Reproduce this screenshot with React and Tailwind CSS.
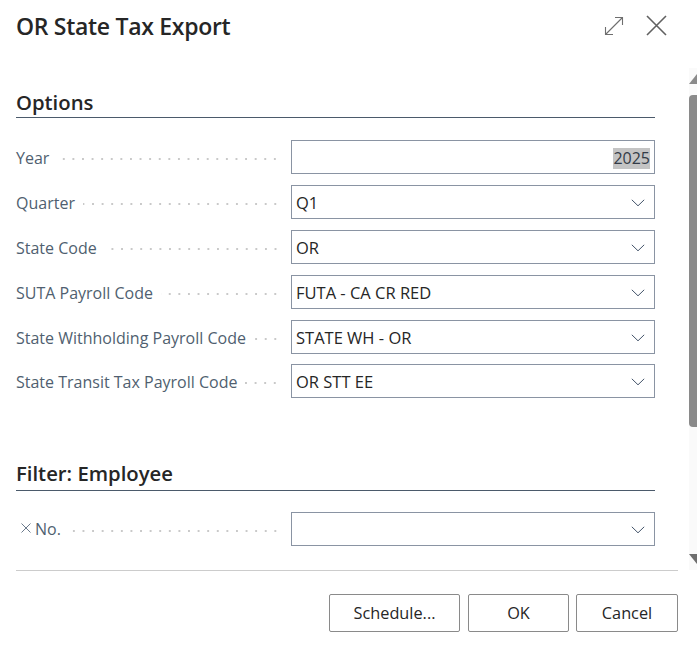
import React from 'react';

const fields = [
  { label: 'Year', value: '2025', kind: 'year' },
  { label: 'Quarter', value: 'Q1' },
  { label: 'State Code', value: 'OR' },
  { label: 'SUTA Payroll Code', value: 'FUTA - CA CR RED' },
  { label: 'State Withholding Payroll Code', value: 'STATE WH - OR' },
  { label: 'State Transit Tax Payroll Code', value: 'OR STT EE', last: true },
];

function Chevron() {
  return (
    <svg width="14" height="8" viewBox="0 0 14 8" fill="none" className="mr-[9px] mt-[1px] shrink-0">
      <path d="M0.8 0.8 L7 6.8 L13.2 0.8" stroke="#44546a" strokeWidth="1" />
    </svg>
  );
}

function Field({ label, value, kind, filter, last }) {
  return (
    <div className={`flex items-center h-[34px] ${last ? '-mt-px' : ''}`}>
      <div className="w-[275px] h-full flex items-center shrink-0">
        {filter && (
          <svg width="12" height="12" viewBox="0 0 12 12" fill="none" className="ml-[4px] mr-[3px] -mt-[3px] shrink-0">
            <path d="M1.5 1.5 L10.5 10.5 M10.5 1.5 L1.5 10.5" stroke="#6b7a8c" strokeWidth="1" />
          </svg>
        )}
        <span className={`text-[#505f70] text-[16px] whitespace-nowrap pr-2 ${filter ? '-mt-[1px]' : 'mt-[1px]'}`}>{label}</span>
        <div className="flex-1 h-[4px] mt-[3px] mr-[11px] bg-[radial-gradient(circle,#c9c9c9_1px,transparent_1.2px)] bg-[length:9.6px_4px] bg-repeat-x bg-right" />
      </div>
      <div className="w-[364px] h-full border border-[#8a94a3] flex items-center justify-between bg-white">
        {kind === 'year' ? (
          <span className="ml-auto mr-[4px] mt-[2px] bg-[#c4c4c4] text-[#333b47] text-[16px] leading-[21px]">{value}</span>
        ) : (
          <>
            <span className="pl-[4px] text-[#262626] text-[16.5px] mt-[2px]">{value}</span>
            <Chevron />
          </>
        )}
      </div>
    </div>
  );
}

function SectionTitle({ children, leading = 'leading-[27px]' }) {
  return (
    <div className={`h-[29px] border-b border-[#4b5a6b] text-[20.3px] ${leading} font-semibold text-[#262626]`}>
      {children}
    </div>
  );
}

function FooterButton({ children, width }) {
  return (
    <button className={`${width} h-[38px] pt-px border border-[#8a8a8a] rounded-[2px] bg-white text-[16.3px] text-[#262626] font-medium`}>
      {children}
    </button>
  );
}

export default function App() {
  return (
    <div className="w-[697px] h-[646px] bg-white flex flex-col overflow-hidden font-['Open_Sans','Noto_Sans',sans-serif]">
      <div className="h-[68px] pl-4 pr-[29px] pt-[9px] flex justify-between items-start shrink-0">
        <h1 className="text-[23px] leading-[34px] font-semibold text-[#262626] tracking-[-0.3px]">OR State Tax Export</h1>
        <div className="flex items-center gap-[22px] pt-[6px] -mr-px">
          <svg width="20" height="20" viewBox="0 0 20 20" fill="none" className="-ml-[3px]">
            <path d="M1.5 18.5 L18.5 1.5 M11 1.5 H18.5 V9 M1.5 11 V18.5 H9" stroke="#6e6e6e" strokeWidth="1.1" />
          </svg>
          <svg width="21" height="21" viewBox="0 0 21 21" fill="none" className="mr-[2px]">
            <path d="M1 1 L20 20 M20 1 L1 20" stroke="#616161" strokeWidth="1.6" />
          </svg>
        </div>
      </div>

      <div className="flex h-[502px] shrink-0">
        <div className="w-[689px] pl-4 pt-[21px]">
          <div className="w-[639px]">
            <SectionTitle>Options</SectionTitle>
            <div className="flex flex-col gap-[11px] mt-[22px]">
              {fields.map((f) => (
                <Field key={f.label} {...f} />
              ))}
            </div>
            <div className="mt-[64px]">
              <SectionTitle leading="leading-[23px]">Filter: Employee</SectionTitle>
            </div>
            <div className="mt-[21px]">
              <Field label="No." filter />
            </div>
          </div>
        </div>
        <div className="w-[8px] bg-[#fafafa] flex flex-col items-start shrink-0">
          <svg width="8" height="11" viewBox="0 0 8 11" className="mt-[6px] shrink-0">
            <path d="M0 10 L8 0 V10 Z" fill="#8a8a8a" />
          </svg>
          <div className="w-full h-[332px] mt-[10px] bg-[#8a8a8a] rounded-tl-[4px] rounded-bl-[4px]" />
          <svg width="8" height="11" viewBox="0 0 8 11" className="mt-[127px] shrink-0">
            <path d="M0 0 H8 V10 Z" fill="#6e6e6e" />
          </svg>
        </div>
      </div>

      <div className="mx-4 w-[662px] border-t border-[#cccccc] pt-[23px] flex justify-end gap-[7px]">
        <FooterButton width="w-[131px] mr-px">Schedule...</FooterButton>
        <FooterButton width="w-[101px]">OK</FooterButton>
        <FooterButton width="w-[102px]">Cancel</FooterButton>
      </div>
    </div>
  );
}
